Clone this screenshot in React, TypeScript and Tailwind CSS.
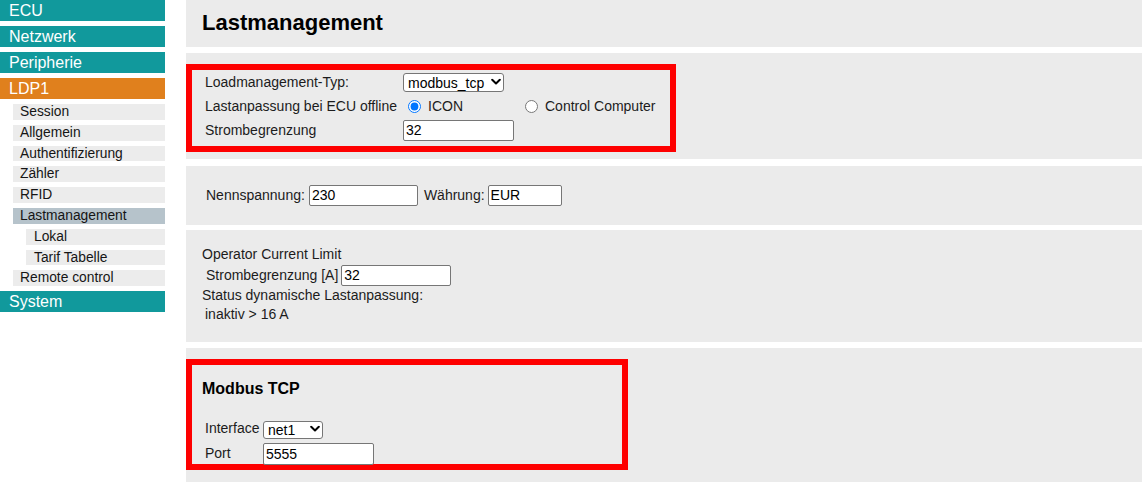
const mainItem = "h-[21px] leading-[21px] pl-[9px] text-[16px] text-white";
const subItem = "h-[15.8px] leading-[16px] text-[13.8px] text-[#151515] bg-[#ececec]";
const inputCls = "h-[21px] border border-[#767676] rounded-[2px] bg-white px-[2px] text-[14px] text-black outline-none";

function Chevron() {
  return (
    <svg
      className="absolute right-[3px] top-1/2 -translate-y-1/2 pointer-events-none"
      width="10"
      height="7"
      viewBox="0 0 10 7"
    >
      <path d="M1.2 1.2 L5 5 L8.8 1.2" fill="none" stroke="#000" strokeWidth="2" strokeLinecap="round" strokeLinejoin="round" />
    </svg>
  );
}

function Select({ value, className }: { value: string; className: string }) {
  return (
    <div className={`relative ${className}`}>
      <select
        className="appearance-none w-full h-full border border-[#767676] rounded-[3px] bg-white pl-[4px] py-0 text-[14px] leading-[16px] text-black outline-none"
        defaultValue={value}
      >
        <option value={value}>{value}</option>
      </select>
      <Chevron />
    </div>
  );
}

function Sidebar() {
  return (
    <nav className="w-[165px] shrink-0 flex flex-col gap-[5px]">
      <div className={`${mainItem} bg-[#11999c]`}>ECU</div>
      <div className={`${mainItem} bg-[#11999c]`}>Netzwerk</div>
      <div className={`${mainItem} bg-[#11999c]`}>Peripherie</div>
      <div className={`${mainItem} bg-[#e0801d]`}>LDP1</div>
      <div className={`${subItem} ml-[13px] pl-[7px]`}>Session</div>
      <div className={`${subItem} ml-[13px] pl-[7px]`}>Allgemein</div>
      <div className={`${subItem} ml-[13px] pl-[7px]`}>Authentifizierung</div>
      <div className={`${subItem} ml-[13px] pl-[7px]`}>Zähler</div>
      <div className={`${subItem} ml-[13px] pl-[7px]`}>RFID</div>
      <div className="h-[15.8px] leading-[16px] text-[13.8px] text-[#151515] bg-[#b6c3cb] ml-[13px] pl-[7px]">
        Lastmanagement
      </div>
      <div className={`${subItem} ml-[26px] pl-[8px]`}>Lokal</div>
      <div className={`${subItem} ml-[26px] pl-[8px]`}>Tarif Tabelle</div>
      <div className={`${subItem} ml-[13px] pl-[7px]`}>Remote control</div>
      <div className={`${mainItem} bg-[#11999c]`}>System</div>
    </nav>
  );
}

function App() {
  return (
    <div className="w-[1146px] h-[485px] overflow-hidden bg-white flex gap-[21px] font-['Liberation_Sans',Arial,sans-serif] text-[14px] text-[#1c1c1c]">
      <Sidebar />

      <main className="flex-1 mr-[4px] flex flex-col">
        {/* Titel */}
        <div className="h-[47px] bg-[#ebebeb] pl-[16px] pt-[10px]">
          <h1 className="text-[22px] leading-[26px] font-bold text-black">Lastmanagement</h1>
        </div>

        {/* Loadmanagement */}
        <div className="mt-[6px] h-[106px] bg-[#ebebeb] pt-[11px]">
          <div className="w-[490px] h-[88px] border-[6px] border-[#fe0000] pl-[13px]">
            <div className="flex items-center h-[24px]">
              <span className="w-[198px]">Loadmanagement-Typ:</span>
              <Select value="modbus_tcp" className="w-[101px] h-[19px]" />
            </div>
            <div className="flex items-center h-[24px]">
              <span className="w-[198px]">Lastanpassung bei ECU offline</span>
              <label className="w-[117px] flex items-center">
                <input type="radio" name="offline" defaultChecked className="w-[13px] h-[13px] ml-[5px] mr-[7px]" />
                ICON
              </label>
              <label className="flex items-center">
                <input type="radio" name="offline" className="w-[13px] h-[13px] ml-[5px] mr-[7px]" />
                Control Computer
              </label>
            </div>
            <div className="flex items-center h-[24px]">
              <span className="w-[198px]">Strombegrenzung</span>
              <input className={`${inputCls} w-[111px] h-[20px]`} defaultValue="32" />
            </div>
          </div>
        </div>

        {/* Nennspannung / Währung */}
        <div className="mt-[7px] h-[59px] bg-[#ebebeb] pl-[20px] flex items-center">
          <span>Nennspannung:</span>
          <input className={`${inputCls} w-[109px] ml-[4px]`} defaultValue="230" />
          <span className="ml-[6px]">Währung:</span>
          <input className={`${inputCls} w-[74px] ml-[3px]`} defaultValue="EUR" />
        </div>

        {/* Operator Current Limit */}
        <div className="mt-[5px] h-[112px] bg-[#ebebeb] pt-[15px] leading-[19px]">
          <div className="pl-[16px]">Operator Current Limit</div>
          <div className="pl-[20px] h-[22px] flex items-center">
            <span>Strombegrenzung [A]</span>
            <input className={`${inputCls} w-[110px] ml-[3px] h-[20px]`} defaultValue="32" />
          </div>
          <div className="pl-[16px]">Status dynamische Lastanpassung:</div>
          <div className="pl-[19px]">inaktiv &gt; 16 A</div>
        </div>

        {/* Modbus TCP */}
        <div className="mt-[6px] h-[134px] bg-[#ebebeb] pt-[11px]">
          <div className="w-[442px] h-[111px] border-[6px] border-[#fe0000]">
            <h2 className="ml-[10px] mt-[14px] text-[16px] leading-[19px] font-bold text-black">Modbus TCP</h2>
            <div className="mt-[18px] pl-[13px]">
              <div className="flex items-center h-[25px]">
                <span className="w-[58px]">Interface</span>
                <Select value="net1" className="w-[60px] h-[18px]" />
              </div>
              <div className="flex items-center h-[25px]">
                <span className="w-[58px]">Port</span>
                <input className={`${inputCls} w-[111px] h-[22px]`} defaultValue="5555" />
              </div>
            </div>
          </div>
        </div>
      </main>
    </div>
  );
}

export default App;
